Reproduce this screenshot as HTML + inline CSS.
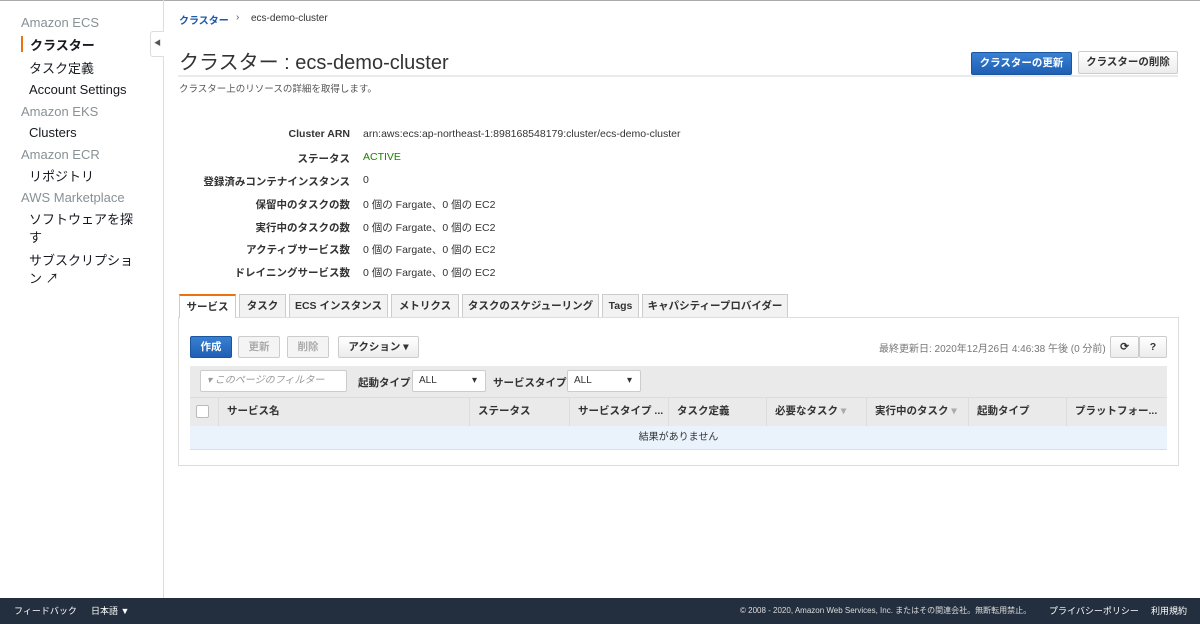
<!DOCTYPE html>
<html><head><meta charset="utf-8"><style>
*{box-sizing:border-box;margin:0;padding:0}
body{width:1200px;height:624px;position:relative;overflow:hidden;background:#fff;font-family:"Liberation Sans","Noto Sans CJK JP",sans-serif;color:#333;font-size:11px}
.a{position:absolute;white-space:nowrap}
.side .h{color:#879196;font-size:13px}
.side .i{color:#16191f;font-size:13px}
.lbl{position:absolute;right:850px;font-weight:bold;font-size:10.5px;color:#333}
.val{position:absolute;left:363px;font-size:10.5px;color:#333}
.tab{position:absolute;top:294px;height:23px;border:1px solid #ccc;border-bottom:none;background:#f2f2f2;font-weight:bold;font-size:10.5px;text-align:center;line-height:22px;color:#333}
.btn{position:absolute;height:22px;border:1px solid #ccc;border-radius:2px;background:linear-gradient(#fff,#ececec);font-weight:bold;font-size:10.5px;text-align:center;line-height:20px}
.th{position:absolute;top:397px;height:29px;line-height:29px;font-weight:bold;font-size:10.5px;padding-left:8px;border-left:1px solid #ddd}
</style></head><body>
<div class="a" style="left:0;top:0;width:1200px;height:1px;background:#aaa"></div>
<div class="side">
<div class="a h" style="left:21px;top:15px">Amazon ECS</div>
<div class="a" style="left:21px;top:36px;width:2px;height:16px;background:#ec7211"></div>
<div class="a i" style="left:30px;top:35px;font-weight:bold">クラスター</div>
<div class="a i" style="left:29px;top:58px">タスク定義</div>
<div class="a i" style="left:29px;top:82px">Account Settings</div>
<div class="a h" style="left:21px;top:104px">Amazon EKS</div>
<div class="a i" style="left:29px;top:125px">Clusters</div>
<div class="a h" style="left:21px;top:147px">Amazon ECR</div>
<div class="a i" style="left:29px;top:166px">リポジトリ</div>
<div class="a h" style="left:21px;top:190px">AWS Marketplace</div>
<div class="a i" style="left:29px;top:209px">ソフトウェアを探</div>
<div class="a i" style="left:29px;top:227px">す</div>
<div class="a i" style="left:29px;top:250px">サブスクリプショ</div>
<div class="a i" style="left:29px;top:268px">ン ↗</div>
</div>
<div class="a" style="left:163px;top:0;width:1px;height:598px;background:#ddd"></div>
<div class="a" style="left:150px;top:31px;width:14px;height:26px;border:1px solid #ddd;border-right:none;background:#fff;border-radius:3px 0 0 3px;font-size:7px;line-height:24px;text-align:center;color:#555">◀</div>

<div class="a" style="left:179px;top:12px;font-size:10px;color:#1f5aa6;font-weight:bold">クラスター</div>
<div class="a" style="left:236px;top:12px;font-size:10px;color:#555">›</div>
<div class="a" style="left:251px;top:13px;font-size:10px;color:#333">ecs-demo-cluster</div>
<div class="a" style="left:179px;top:46px;font-size:20px;color:#333">クラスター : ecs-demo-cluster</div>
<div class="a" style="left:178px;top:75px;width:1000px;height:2px;background:#eaeaea"></div>
<div class="a" style="left:179px;top:81px;font-size:9.5px;color:#555">クラスター上のリソースの詳細を取得します。</div>
<div class="btn" style="left:971px;top:52px;width:101px;height:23px;background:linear-gradient(#3a80d2,#1e5fb3);border-color:#1a56a0;color:#fff">クラスターの更新</div>
<div class="btn" style="left:1078px;top:51px;width:100px;height:23px;color:#333">クラスターの削除</div>

<div class="lbl" style="top:128px">Cluster ARN</div><div class="val" style="top:128px">arn:aws:ecs:ap-northeast-1:898168548179:cluster/ecs-demo-cluster</div>
<div class="lbl" style="top:151px">ステータス</div><div class="val" style="top:151px;color:#1d8102">ACTIVE</div>
<div class="lbl" style="top:174px">登録済みコンテナインスタンス</div><div class="val" style="top:174px">0</div>
<div class="lbl" style="top:197px">保留中のタスクの数</div><div class="val" style="top:197px">0 個の Fargate、0 個の EC2</div>
<div class="lbl" style="top:220px">実行中のタスクの数</div><div class="val" style="top:220px">0 個の Fargate、0 個の EC2</div>
<div class="lbl" style="top:242px">アクティブサービス数</div><div class="val" style="top:242px">0 個の Fargate、0 個の EC2</div>
<div class="lbl" style="top:265px">ドレイニングサービス数</div><div class="val" style="top:265px">0 個の Fargate、0 個の EC2</div>

<div class="a" style="left:178px;top:317px;width:1001px;height:149px;border:1px solid #ddd"></div>
<div class="tab" style="left:179px;width:57px;background:#fff;border-top:2px solid #ec7211;height:24px">サービス</div>
<div class="tab" style="left:239px;width:47px">タスク</div>
<div class="tab" style="left:289px;width:99px">ECS インスタンス</div>
<div class="tab" style="left:391px;width:68px">メトリクス</div>
<div class="tab" style="left:462px;width:137px">タスクのスケジューリング</div>
<div class="tab" style="left:602px;width:37px">Tags</div>
<div class="tab" style="left:642px;width:146px">キャパシティープロバイダー</div>

<div class="btn" style="left:190px;top:336px;width:42px;background:linear-gradient(#3a80d2,#1e5fb3);border-color:#1a56a0;color:#fff">作成</div>
<div class="btn" style="left:238px;top:336px;width:42px;color:#aaa;background:#f4f4f4">更新</div>
<div class="btn" style="left:287px;top:336px;width:42px;color:#aaa;background:#f4f4f4">削除</div>
<div class="btn" style="left:338px;top:336px;width:81px">アクション ▾</div>
<div class="a" style="left:879px;top:340px;font-size:10px;color:#777">最終更新日: 2020年12月26日 4:46:38 午後 (0 分前)</div>
<div class="btn" style="left:1110px;top:336px;width:29px">⟳</div>
<div class="btn" style="left:1139px;top:336px;width:28px">?</div>

<div class="a" style="left:190px;top:366px;width:977px;height:31px;background:#eaeaea"></div>
<div class="a" style="left:200px;top:370px;width:147px;height:22px;background:#fff;border:1px solid #ccc;border-radius:2px;font-size:10px;color:#999;font-style:italic;line-height:20px;padding-left:6px">▾ このページのフィルター</div>
<div class="a" style="left:358px;top:375px;font-weight:bold;font-size:10.5px">起動タイプ</div>
<div class="a" style="left:412px;top:370px;width:74px;height:22px;background:#fff;border:1px solid #ccc;border-radius:2px;font-size:10px;line-height:20px;padding-left:6px">ALL<span style="position:absolute;right:8px">▾</span></div>
<div class="a" style="left:493px;top:375px;font-weight:bold;font-size:10.5px">サービスタイプ</div>
<div class="a" style="left:567px;top:370px;width:74px;height:22px;background:#fff;border:1px solid #ccc;border-radius:2px;font-size:10px;line-height:20px;padding-left:6px">ALL<span style="position:absolute;right:8px">▾</span></div>

<div class="a" style="left:190px;top:397px;width:977px;height:29px;background:#eaeaea;border-top:1px solid #ddd"></div>
<div class="a" style="left:196px;top:405px;width:13px;height:13px;background:#fff;border:1px solid #bbb;border-radius:2px"></div>
<div class="th" style="left:218px;width:251px">サービス名</div>
<div class="th" style="left:469px;width:100px">ステータス</div>
<div class="th" style="left:569px;width:99px">サービスタイプ ...</div>
<div class="th" style="left:668px;width:98px">タスク定義</div>
<div class="th" style="left:766px;width:100px">必要なタスク <span style="color:#aaa">▾</span></div>
<div class="th" style="left:866px;width:102px">実行中のタスク <span style="color:#aaa">▾</span></div>
<div class="th" style="left:968px;width:98px">起動タイプ</div>
<div class="th" style="left:1066px;width:101px">プラットフォー...</div>
<div class="a" style="left:190px;top:426px;width:977px;height:24px;background:#eaf3fb;border-bottom:1px solid #ddd;text-align:center;line-height:23px;font-size:10px">結果がありません</div>

<div class="a" style="left:0;top:598px;width:1200px;height:26px;background:#232f3e;color:#fff;font-size:9px;line-height:26px">
<span class="a" style="left:14px">フィードバック</span>
<span class="a" style="left:91px">日本語 ▼</span>
<span class="a" style="left:740px;color:#ddd;font-size:8px">© 2008 - 2020, Amazon Web Services, Inc. またはその関連会社。無断転用禁止。</span>
<span class="a" style="left:1049px">プライバシーポリシー</span>
<span class="a" style="left:1151px">利用規約</span>
</div>
</body></html>
